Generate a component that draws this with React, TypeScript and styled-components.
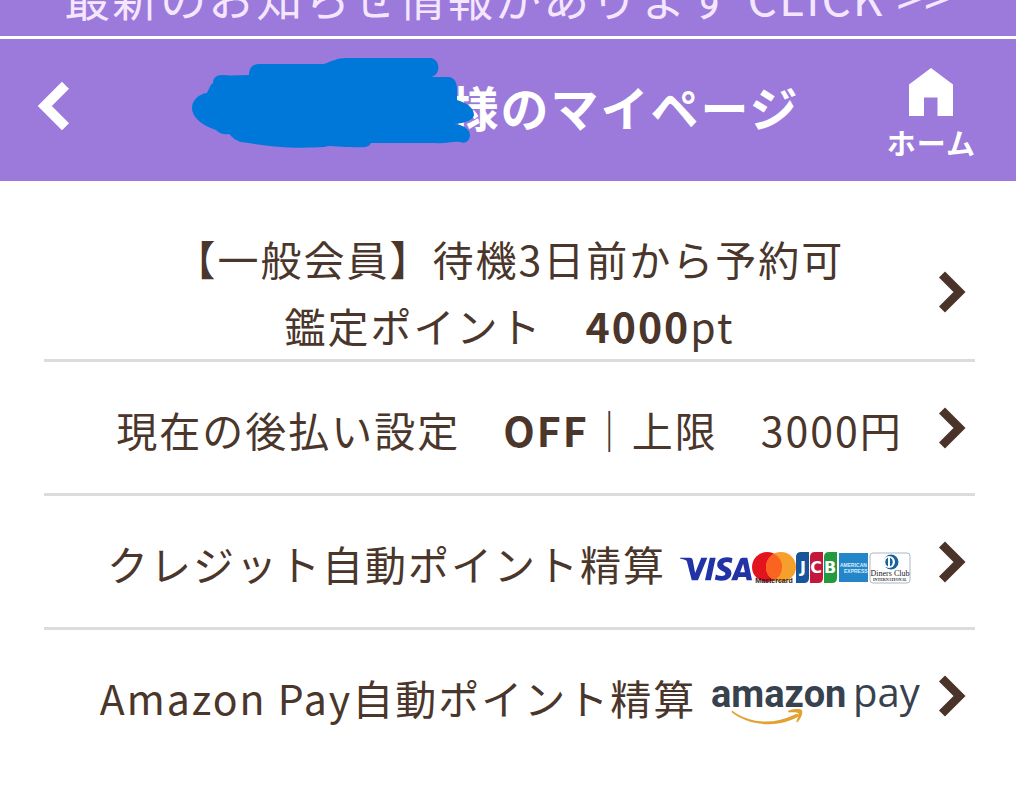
import React from "react";
import styled, { createGlobalStyle } from "styled-components";
import { SiVisa } from "react-icons/si";

const GlobalStyle = createGlobalStyle`
  *, *::before, *::after { box-sizing: border-box; }
  body {
    margin: 0;
    background: #fff;
    color: #4a362b;
    font-family: "Noto Sans CJK JP", "Noto Sans", sans-serif;
  }
`;

const Page = styled.div`
  padding-right: 8px;
`;

const NewsBanner = styled.a`
  display: flex;
  align-items: flex-end;
  justify-content: center;
  height: 36px;
  overflow: hidden;
  background: #9b7adb;
  color: #f5e6ff;
  font-size: 46px;
  line-height: 80px;
  letter-spacing: 2px;
  white-space: nowrap;
  text-decoration: none;
`;

const Header = styled.header`
  display: grid;
  grid-template-columns: 1fr auto 1fr;
  align-items: center;
  margin-top: 3px;
  padding: 29px 40px 14px 36px;
  background: #9b7adb;
  color: #fff;
`;

const BackButton = styled.button`
  justify-self: start;
  padding: 0;
  border: 0;
  background: none;
  color: inherit;
  cursor: pointer;

  svg { display: block; margin-bottom: 24px; }
`;

const Title = styled.h1`
  position: relative;
  margin: 0 0 24px;
  padding-left: 238px;
  font-size: 48px;
  line-height: 72px;
  letter-spacing: 2px;
  font-weight: 700;
  white-space: nowrap;
`;

const NameCover = styled.svg`
  position: absolute;
  left: -20px;
  top: -13px;
`;

const HomeLink = styled.a`
  justify-self: end;
  display: flex;
  flex-direction: column;
  align-items: center;
  color: inherit;
  font-size: 29px;
  line-height: 50px;
  letter-spacing: 1px;
  font-weight: 700;
  text-decoration: none;
`;

const Menu = styled.nav`
  padding: 44px 41px 0 44px;
`;

const MenuList = styled.ul`
  margin: 0;
  padding: 0;
  list-style: none;
`;

const MenuItem = styled.li`
  border-bottom: 3px solid #dcdcdc;
  &:last-child { border-bottom: 0; }
`;

const Label = styled.span`
  grid-area: 1 / 1;
  display: flex;
  align-items: center;
  justify-content: center;
  gap: 14px;
  text-align: center;
  white-space: nowrap;
`;

const MenuLink = styled.a<{ $tall?: boolean }>`
  display: grid;
  align-items: center;
  padding: ${(p) => (p.$tall ? "0" : "30px 0")};
  color: inherit;
  text-decoration: none;
  font-size: 41px;
  line-height: 67px;
  letter-spacing: 2px;

  ${Label} { padding-top: ${(p) => (p.$tall ? "0" : "4px")}; }
`;

const Strong = styled.b`
  font-weight: 700;
`;

const RowChevron = styled.svg`
  grid-area: 1 / 1;
  justify-self: end;
  margin-right: 9px;
`;

const Logo = styled.svg`
  flex: none;
  margin-top: 10px;
  overflow: visible;
  letter-spacing: 0;
`;

function Chevron() {
  return (
    <RowChevron width="30" height="44" viewBox="0 0 30 44" aria-hidden="true">
      <path d="M6 4.5 23.5 22 6 39.5" fill="none" stroke="#4a342a" strokeWidth="8.5" />
    </RowChevron>
  );
}

function CardLogos() {
  return (
    <Logo width="232" height="34" viewBox="0 0 232 34" role="img" aria-label="VISA Mastercard JCB American Express Diners Club">
      <SiVisa x="0" y="-19" size={72} color="#2233a5" />
      <circle cx="87" cy="15" r="15" fill="#e3131f" />
      <circle cx="101" cy="15" r="15" fill="#f6a02c" />
      <path d="M94 1.7a15 15 0 0 1 0 26.6 15 15 0 0 1 0-26.6Z" fill="#fb6320" />
      <text x="94" y="31" textAnchor="middle" fontFamily="Liberation Sans" fontWeight="700" fontSize="7" fill="#2b1a1a">Mastercard</text>
      <path d="M121 0h8v26q0 5-5 5h-8V5q0-5 5-5Z" fill="#17549a" />
      <path d="M135 0h8v26q0 5-5 5h-8V5q0-5 5-5Z" fill="#c3183c" />
      <path d="M149 0h8v26q0 5-5 5h-8V5q0-5 5-5Z" fill="#239a3d" />
      <g fontFamily="DejaVu Sans" fontWeight="700" fontSize="16" fill="#fff" textAnchor="middle">
        <text x="123" y="21">J</text>
        <text x="136" y="21">C</text>
        <text x="150" y="21">B</text>
      </g>
      <path d="M159 1h29v29h-29Z" fill="#2486c8" />
      <g fontFamily="Liberation Sans" fontWeight="700" fontSize="5" fill="#d9eefa">
        <text x="160" y="15">AMERICAN</text>
        <text x="164" y="21">EXPRESS</text>
      </g>
      <rect x="190" y="1" width="40" height="30" rx="3" fill="#fff" stroke="#a9b7c6" />
      <circle cx="211" cy="10" r="7.5" fill="#17649b" />
      <circle cx="209" cy="10" r="6" fill="#fff" />
      <path d="M208 5.5a5 5 0 0 0 0 9ZM210 5.5a5 5 0 0 1 0 9Z" fill="#17649b" />
      <text x="210" y="24" textAnchor="middle" fontFamily="Liberation Serif" fontSize="8" fill="#222">Diners Club</text>
      <text x="210" y="29" textAnchor="middle" fontFamily="Liberation Serif" fontWeight="700" fontSize="4" fill="#333">INTERNATIONAL</text>
    </Logo>
  );
}

function AmazonPayLogo() {
  return (
    <Logo width="209" height="50" viewBox="0 0 209 50" role="img" aria-label="amazon pay">
      <text x="1" y="29" fontFamily="Roboto" fontWeight="700" fontSize="38" fill="#37424e">amazon</text>
      <text x="143" y="29" fontFamily="Open Sans" fontSize="40" fill="#37424e">pay</text>
      <g transform="translate(3 -4)">
        <path d="M19 36.500C37 50 61 51 82 40.500 85 39 87 41.500 84 43.300 63 55 34 51 18.500 38Z" fill="#e3a130" />
        <path d="M75 37C80 34.500 88 34.500 89 36.500 90 39 88 45 84.500 48 83.500 48.500 83 48 83.500 47 85 43.500 86 40 85 39 84 38 79 38 75.500 38.500Z" fill="#e3a130" />
      </g>
    </Logo>
  );
}

export default function App() {
  return (
    <>
      <GlobalStyle />
      <Page>
        <NewsBanner href="#news">最新のお知らせ情報があります CLICK &gt;&gt;</NewsBanner>
        <Header>
          <BackButton type="button" aria-label="戻る">
            <svg width="36" height="50" viewBox="0 0 36 50" aria-hidden="true">
              <path d="M29.500 4.300 8.800 25 29.500 45.700" fill="none" stroke="#fff" strokeWidth="10" />
            </svg>
          </BackButton>
          <Title>
            様のマイページ
            <NameCover width="284" height="92" viewBox="0 0 284 92" aria-hidden="true">
              <path
                d="M0 51C0 43 7 37 15 36 17 32 18 28 21 26 21 21 24 18 30 18 39 19 48 18 57 18 57 11 61 7 67 7H132C140 4 146 1 154 1H238C249 2 249 18 239 20H257C263 21 265 26 265 32V43C275 46 282 51 282 58 281 63 274 66 262 67 272 68 278 72 278 79 277 84 274 87 268 85 262 84 252 87 244 86H179C176 92 168 90 155 90 144 90 138 88 132 90 98 92 76 89 49 85 43 83 40 80 37 77 31 78 27 76 24 73 9 68 0 60 0 51Z"
                fill="#0078d9"
              />
            </NameCover>
          </Title>
          <HomeLink href="#home">
            <svg width="44" height="49" viewBox="0 0 44 49" aria-hidden="true">
              <path d="M22 0 44 16.500V48H28.500V29.500H15V48H0V16.500Z" fill="#fff" />
            </svg>
            ホーム
          </HomeLink>
        </Header>
        <Menu>
          <MenuList>
            <MenuItem>
              <MenuLink href="#points" $tall>
                <Label>
                  <span>
                    【一般会員】待機3日前から予約可
                    <br />
                    鑑定ポイント　<Strong>4000</Strong>pt
                  </span>
                </Label>
                <Chevron />
              </MenuLink>
            </MenuItem>
            <MenuItem>
              <MenuLink href="#deferred">
                <Label>
                  <span>
                    現在の後払い設定　<Strong>OFF</Strong>｜上限　3000円
                  </span>
                </Label>
                <Chevron />
              </MenuLink>
            </MenuItem>
            <MenuItem>
              <MenuLink href="#credit">
                <Label>
                  <span>クレジット自動ポイント精算</span>
                  <CardLogos />
                </Label>
                <Chevron />
              </MenuLink>
            </MenuItem>
            <MenuItem>
              <MenuLink href="#amazon-pay">
                <Label>
                  <span>Amazon Pay自動ポイント精算</span>
                  <AmazonPayLogo />
                </Label>
                <Chevron />
              </MenuLink>
            </MenuItem>
          </MenuList>
        </Menu>
      </Page>
    </>
  );
}
